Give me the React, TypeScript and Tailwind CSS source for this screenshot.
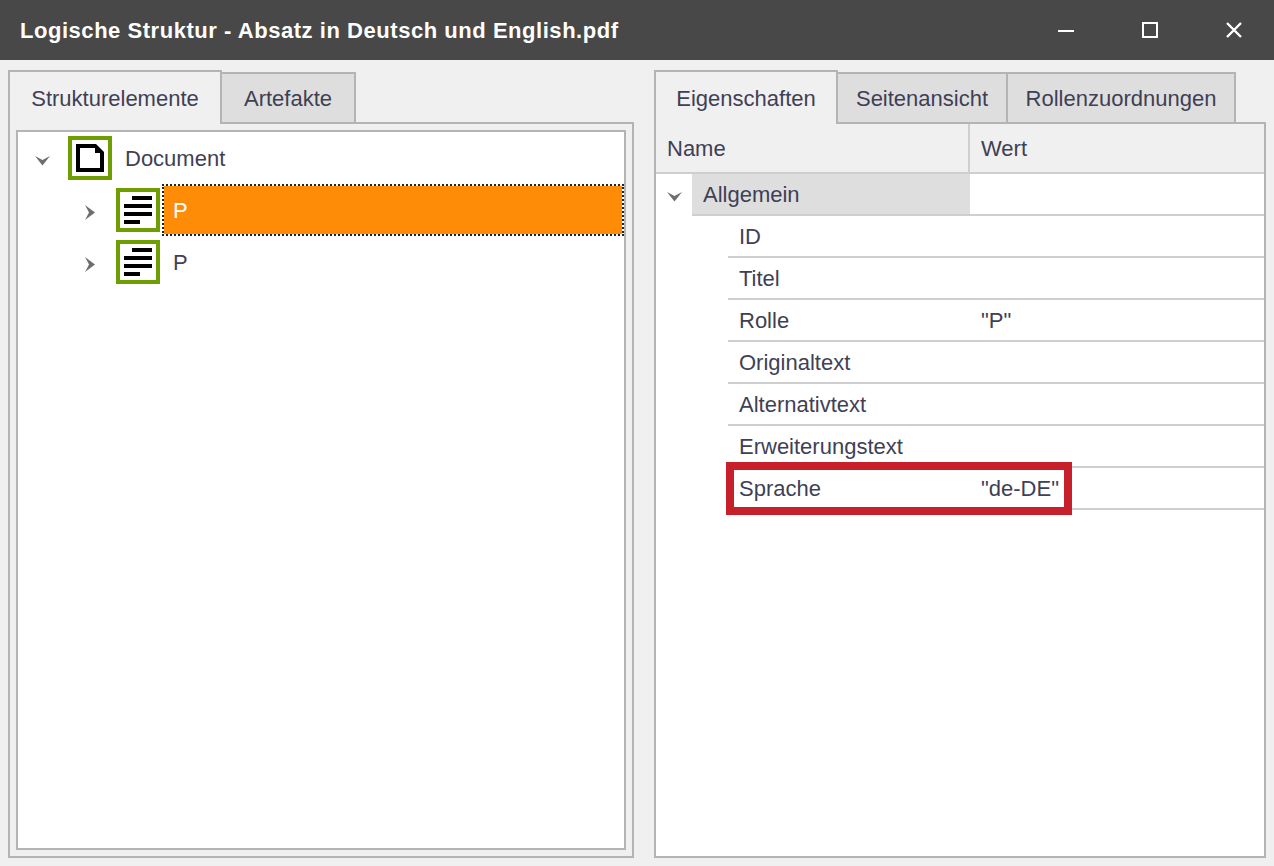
const FONT = 'font-["Liberation_Sans",Arial,sans-serif]';

const LEFT_TABS = ['Strukturelemente', 'Artefakte'];
const RIGHT_TABS = ['Eigenschaften', 'Seitenansicht', 'Rollenzuordnungen'];

const PROPERTIES = [
  { name: 'ID', value: '' },
  { name: 'Titel', value: '' },
  { name: 'Rolle', value: '"P"' },
  { name: 'Originaltext', value: '' },
  { name: 'Alternativtext', value: '' },
  { name: 'Erweiterungstext', value: '' },
  { name: 'Sprache', value: '"de-DE"' },
];

function ChevronDown() {
  return (
    <svg width="15" height="11" viewBox="0 0 15 11" className="shrink-0">
      <path d="M0 1 L7.5 5 L15 1 L7.5 10.5 Z" fill="#6e6e6e" />
    </svg>
  );
}

function ChevronRight() {
  return (
    <svg width="10" height="15" viewBox="0 0 10 15" className="shrink-0">
      <path d="M0 0 L10 7.5 L0 15 L4 7.5 Z" fill="#6e6e6e" />
    </svg>
  );
}

function DocIcon() {
  return (
    <svg width="44" height="44" viewBox="0 0 44 44" className="shrink-0">
      <rect x="2" y="2" width="40" height="40" fill="#fff" stroke="#6f9e00" strokeWidth="4" />
      <path d="M8 8 H28 L36 16 V36 H8 Z" fill="#000" />
      <path d="M12 12 H27 V17 H32 V32 H12 Z" fill="#fff" />
    </svg>
  );
}

function ParagraphIcon() {
  return (
    <svg width="44" height="44" viewBox="0 0 44 44" className="shrink-0">
      <rect x="2" y="2" width="40" height="40" fill="#fff" stroke="#6f9e00" strokeWidth="4" />
      <rect x="16" y="8" width="20" height="4" fill="#000" />
      <rect x="8" y="16" width="28" height="4" fill="#000" />
      <rect x="8" y="24" width="28" height="4" fill="#000" />
      <rect x="8" y="32" width="16" height="4" fill="#000" />
    </svg>
  );
}

function Tabs({ tabs, widths }: { tabs: string[]; widths: string[] }) {
  return (
    <div className="flex h-[54px] -mb-[2px] relative z-10">
      {tabs.map((tab, i) =>
        i === 0 ? (
          <div
            key={tab}
            className={`${widths[i]} h-[54px] bg-[#f0f0f0] border-2 border-b-0 border-[#b4b4b4] flex items-center justify-center`}
          >
            {tab}
          </div>
        ) : (
          <div
            key={tab}
            className={`${widths[i]} h-[52px] mt-[2px] -ml-[2px] bg-[#dedede] border-2 border-[#b4b4b4] flex items-center justify-center`}
          >
            {tab}
          </div>
        )
      )}
    </div>
  );
}

function TreeRow({ indent, selected, icon, label, chevron }: { indent: string; selected?: boolean; icon: React.ReactNode; label: string; chevron: React.ReactNode }) {
  return (
    <div className={`flex h-[52px] items-center ${indent}`}>
      <div className="w-[50px] flex justify-center pr-[2px] pt-[4px]">{chevron}</div>
      {icon}
      <div
        className={
          selected
            ? 'flex-1 h-[52px] ml-[2px] pl-[9px] flex items-center bg-[#ff8c07] bg-clip-padding text-white border-2 border-dotted border-[#222222]'
            : 'flex-1 ml-[2px] pl-[11px]'
        }
      >
        {label}
      </div>
    </div>
  );
}

export default function App() {
  return (
    <div className={`w-[1274px] h-[866px] flex flex-col bg-[#f0f0f0] text-[#3f3f55] text-[22px] overflow-hidden ${FONT}`}>
      <div className="h-[60px] bg-[#484848] flex items-center justify-between shrink-0">
        <div className="pl-[20px] text-white font-bold text-[22px] tracking-[0.54px]">Logische Struktur - Absatz in Deutsch und English.pdf</div>
        <div className="flex items-center gap-[68px] pr-[32px]">
          <svg width="16" height="16" viewBox="0 0 16 16"><rect x="0" y="8" width="16" height="2" fill="#fff" /></svg>
          <svg width="16" height="16" viewBox="0 0 16 16"><rect x="1" y="1" width="14" height="14" fill="none" stroke="#fff" strokeWidth="2" /></svg>
          <svg width="16" height="16" viewBox="0 0 16 16"><path d="M1 1 L15 15 M15 1 L1 15" stroke="#fff" strokeWidth="2.4" /></svg>
        </div>
      </div>

      <div className="flex gap-[20px] pt-[10px] px-[8px] flex-1">
        <div className="w-[626px] flex flex-col h-[788px]">
          <Tabs tabs={LEFT_TABS} widths={['w-[214px]', 'w-[136px]']} />
          <div className="flex-1 border-2 border-[#b4b4b4] p-[6px] flex">
            <div className="flex-1 bg-white border-2 border-[#b4b4b4]">
              <TreeRow indent="" icon={<DocIcon />} label="Document" chevron={<ChevronDown />} />
              <TreeRow indent="pl-[48px]" selected icon={<ParagraphIcon />} label="P" chevron={<ChevronRight />} />
              <TreeRow indent="pl-[48px]" icon={<ParagraphIcon />} label="P" chevron={<ChevronRight />} />
            </div>
          </div>
        </div>

        <div className="w-[612px] flex flex-col h-[788px] relative">
          <Tabs tabs={RIGHT_TABS} widths={['w-[184px]', 'w-[172px]', 'w-[230px]']} />
          <div className="flex-1 border-2 border-[#b4b4b4] bg-white">
            <div className="flex h-[50px] bg-[#f0f0f0] border-b-2 border-[#cfcfcf]">
              <div className="w-[312px] pl-[11px] flex items-center">Name</div>
              <div className="flex-1 pl-[11px] flex items-center border-l-2 border-[#cfcfcf]">Wert</div>
            </div>
            <div className="flex h-[42px]">
              <div className="w-[36px] flex items-center justify-center pt-[2px]"><ChevronDown /></div>
              <div className="flex-1 flex border-b-2 border-[#cfcfcf]">
                <div className="w-[278px] bg-[#dedede] pl-[11px] flex items-center">Allgemein</div>
              </div>
            </div>
            {PROPERTIES.map((prop) => (
              <div key={prop.name} className="flex h-[42px] ml-[72px] border-b-2 border-[#cfcfcf] items-center">
                <div className="w-[242px] pl-[11px]">{prop.name}</div>
                <div className="pl-[11px]">{prop.value}</div>
              </div>
            ))}
          </div>
          <div className="absolute left-[72px] top-[392px] w-[346px] h-[53px] border-[8px] border-[#c8202a]" />
        </div>
      </div>
    </div>
  );
}
